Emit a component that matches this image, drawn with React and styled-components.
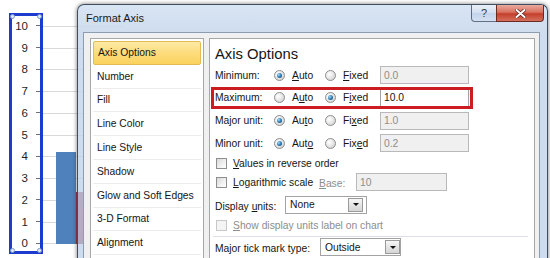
import React from 'react';
import styled, { createGlobalStyle, css } from 'styled-components';

const GlobalStyle = createGlobalStyle`
	html, body {
		margin: 0;
		padding: 0;
	}
	body {
		width: 550px;
		height: 258px;
		overflow: hidden;
		background: #fff;
		font-family: 'Liberation Sans', Arial, sans-serif;
	}
	* {
		box-sizing: border-box;
	}
`;

const Stage = styled.div`
	position: relative;
	width: 550px;
	height: 258px;
	overflow: hidden;
	background: #fff;
`;

// memo: chart behind the dialog
const Chart = styled.div`
	display: flex;
	align-items: flex-start;
	height: 100%;
	padding: 13px 0 0 9px;
`;

const AxisBox = styled.div`
	position: relative;
	width: 34px;
	height: 241px;
	border: 3px solid #1d3ccf;
`;

const Handle = styled.span`
	position: absolute;
	width: 5px;
	height: 5px;
	border-radius: 50%;
	background: #dbe7f7;
	border: 1px solid #7d9cc9;
	${(p) => (p.$top ? 'top: -2px;' : 'bottom: -2px;')}
	${(p) => (p.$left ? 'left: -2px;' : 'right: -2px;')}
`;

const AxisLabels = styled.div`
	display: flex;
	flex-direction: column;
	margin-top: -0.9px;
`;

const AxisLabel = styled.div`
	height: 21.75px;
	display: flex;
	align-items: center;
	justify-content: flex-end;
	gap: 8px;
	font-size: 11.5px;
	color: #1f1f1f;

	&::after {
		content: '';
		width: 4px;
		height: 1px;
		background: #6f6f6f;
	}
`;

const Plot = styled.div`
	width: 80px;
	height: 218.5px;
	margin-top: 12.5px;
	padding-left: 13px;
	display: flex;
	align-items: flex-end;
	background: repeating-linear-gradient(
		to bottom,
		#d9d9d9 0,
		#d9d9d9 1px,
		transparent 1px,
		transparent 21.75px
	);
`;

const Bar = styled.div`
	width: 20px;
	background: ${(p) => p.$color};
`;

// memo: dialog window
const Dialog = styled.div`
	position: absolute;
	left: 77px;
	top: 4px;
	width: 471px;
	height: 270px;
	display: flex;
	flex-direction: column;
	padding: 0 7px 0 5px;
	border: 1px solid #3f4d5e;
	border-bottom: none;
	border-radius: 7px 7px 0 0;
	background: linear-gradient(
		to bottom,
		rgba(214, 227, 243, 0.95) 0,
		rgba(198, 214, 236, 0.85) 30px,
		rgba(186, 206, 234, 0.72) 100%
	);
	box-shadow: 0 0 4px rgba(0, 0, 0, 0.55);
`;

const TitleBar = styled.div`
	height: 27px;
	display: flex;
	align-items: flex-start;
`;

const Title = styled.div`
	flex: 1;
	padding-left: 3px;
	line-height: 27px;
	font-size: 11px;
	color: #1b1b1b;
`;

const CaptionButtons = styled.div`
	display: flex;
	margin-right: -4px;
`;

const HelpButton = styled.div`
	width: 25px;
	height: 17px;
	display: flex;
	align-items: center;
	justify-content: center;
	border: 1px solid rgba(55, 70, 92, 0.75);
	border-top: none;
	border-right: none;
	border-radius: 0 0 0 4px;
	background: linear-gradient(to bottom, #e9f0f9 0, #d3dfee 50%, #c2d3ea 51%, #d4e1f1 100%);
	font-size: 11px;
	color: #3a3a3a;
`;

const CloseButton = styled.div`
	width: 48px;
	height: 17px;
	display: flex;
	align-items: center;
	justify-content: center;
	border: 1px solid #6b2a22;
	border-top: none;
	border-radius: 0 0 4px 0;
	background: linear-gradient(to bottom, #e9a99c 0, #d9725f 45%, #c43f2c 55%, #d4705c 100%);
`;

const Client = styled.div`
	flex: 1;
	display: flex;
	gap: 5px;
	padding: 5px 4px 0 6px;
	border: 1px solid #8d9cb1;
	border-bottom: none;
	background: #f0f0f0;
`;

const Nav = styled.div`
	width: 114px;
	height: 240px;
	flex: none;
	padding: 2px;
	border: 1px solid #a7a7a7;
	background: #fff;
`;

const NavItem = styled.div`
	height: 23.8px;
	display: flex;
	align-items: center;
	padding-left: 4px;
	font-size: 10.3px;
	color: #151515;
	border-bottom: 1px solid #ececec;

	${(p) =>
		p.$active &&
		css`
			border: 1px solid #e2bb57;
			border-radius: 2px;
			background: linear-gradient(to bottom, #feeaa6 0, #fcdc7c 50%, #fbd25f 100%);
		`}
`;

const Panel = styled.div`
	width: 326px;
	height: 240px;
	flex: none;
	padding: 6px 0 0 5px;
	border: 1px solid #a7a7a7;
	background: #fff;
`;

const Heading = styled.div`
	height: 19px;
	line-height: 19px;
	font-size: 14.8px;
	color: #151515;
`;

const Text = styled.span`
	font-size: 10.3px;
	color: ${(p) => (p.$disabled ? '#8d8d8d' : '#151515')};
	white-space: nowrap;
`;

const Key = styled.span`
	text-decoration: underline;
	text-underline-offset: 1px;
`;

const AxisRow = styled.div`
	position: relative;
	height: 22.67px;
	display: grid;
	grid-template-columns: 59px 51px 55px 89px;
	align-items: center;
	width: 254px;

	${(p) =>
		p.$highlight &&
		css`
			&::after {
				content: '';
				position: absolute;
				left: -4px;
				right: -4px;
				top: 0;
				bottom: 0;
				border: 3px solid #cc1c22;
			}
		`}
`;

const Option = styled.div`
	display: flex;
	align-items: center;
	gap: 7px;
`;

const Radio = styled.span`
	width: 11px;
	height: 11px;
	flex: none;
	display: flex;
	align-items: center;
	justify-content: center;
	border-radius: 50%;
	border: 1px solid #8c8c8c;
	background: radial-gradient(circle at 35% 35%, #ffffff 0, #e9e9e9 45%, #c6c6c6 100%);

	${(p) =>
		p.$checked &&
		css`
			&::after {
				content: '';
				width: 5px;
				height: 5px;
				border-radius: 50%;
				background: radial-gradient(circle at 35% 35%, #a6dbf6 0, #2f7db5 50%, #0d3a5e 100%);
			}
		`}
`;

const TextBox = styled.div`
	width: ${(p) => p.$w || 89}px;
	height: 18px;
	display: flex;
	align-items: center;
	padding-left: 3px;
	font-size: 10.3px;
	border: 1px solid ${(p) => (p.$disabled ? '#b9b9b9' : '#a3a3a3')};
	background: ${(p) => (p.$disabled ? '#f0f0f0' : '#fff')};
	color: ${(p) => (p.$disabled ? '#8d8d8d' : '#151515')};
`;

const Row = styled.div`
	height: ${(p) => p.$h}px;
	display: flex;
	align-items: center;
`;

const CheckLabel = styled.div`
	display: flex;
	align-items: center;
	gap: 6px;
	padding-left: 1px;
	width: ${(p) => (p.$w ? `${p.$w}px` : 'auto')};
`;

const Checkbox = styled.span`
	width: 11px;
	height: 11px;
	flex: none;
	border: 1px solid ${(p) => (p.$disabled ? '#c8c8c8' : '#8e8e8e')};
	background: ${(p) =>
		p.$disabled ? '#f4f4f4' : 'linear-gradient(135deg, #d9d9d9 0, #f2f2f2 60%, #ffffff 100%)'};
`;

const FieldLabel = styled.div`
	width: ${(p) => p.$w}px;
	flex: none;
`;

const Select = styled.div`
	width: ${(p) => p.$w}px;
	height: 18px;
	display: flex;
	align-items: center;
	padding: 0 ${(p) => p.$inset}px 0 4px;
	border: 1px solid #a3a3a3;
	background: #fff;
`;

const SelectText = styled.span`
	flex: 1;
	font-size: 10.3px;
	color: #151515;
`;

const DropButton = styled.span`
	width: 15px;
	height: 14px;
	display: flex;
	align-items: center;
	justify-content: center;
	border: 1px solid #9a9a9a;
	background: linear-gradient(to bottom, #f7f7f7 0, #e4e4e4 50%, #d6d6d6 100%);

	&::after {
		content: '';
		border-left: 3px solid transparent;
		border-right: 3px solid transparent;
		border-top: 3px solid #111;
	}
`;

const Separator = styled.div`
	height: 1px;
	margin: 2px 6px 0 -2px;
	background: #dcdfe3;
`;

const navItems = [
	'Axis Options',
	'Number',
	'Fill',
	'Line Color',
	'Line Style',
	'Shadow',
	'Glow and Soft Edges',
	'3-D Format',
	'Alignment',
];

const axisRows = [
	{ label: 'Minimum:', auto: true, value: '0.0', key: 0 },
	{ label: 'Maximum:', auto: false, value: '10.0', key: 1 },
	{ label: 'Major unit:', auto: true, value: '1.0', key: 2 },
	{ label: 'Minor unit:', auto: true, value: '0.2', key: 3 },
];

const bars = [
	{ value: 4.23, color: '#4f81bd' },
	{ value: 2.39, color: '#9b3f4c' },
];

const withKey = (text, i) => (
	<>
		{text.slice(0, i)}
		<Key>{text[i]}</Key>
		{text.slice(i + 1)}
	</>
);

const CloseGlyph = () => (
	<svg width="11" height="9" viewBox="0 0 11 9">
		<path d="M1.5 1 L9.5 8 M9.5 1 L1.5 8" stroke="#5a1f18" strokeWidth="3.4" strokeLinecap="round" />
		<path d="M1.5 1 L9.5 8 M9.5 1 L1.5 8" stroke="#ffffff" strokeWidth="2" strokeLinecap="round" />
	</svg>
);

const App = () => {
	const labels = [10, 9, 8, 7, 6, 5, 4, 3, 2, 1, 0];

	return (
		<>
			<GlobalStyle />
			<Stage>
				<Chart>
					<AxisBox>
						<Handle $top $left />
						<Handle $top />
						<Handle $left />
						<Handle />
						<AxisLabels>
							{labels.map((n) => (
								<AxisLabel key={n}>{n}</AxisLabel>
							))}
						</AxisLabels>
					</AxisBox>
					<Plot>
						{bars.map((bar) => (
							<Bar key={bar.color} $color={bar.color} style={{ height: `${bar.value * 21.75}px` }} />
						))}
					</Plot>
				</Chart>

				<Dialog>
					<TitleBar>
						<Title>Format Axis</Title>
						<CaptionButtons>
							<HelpButton>?</HelpButton>
							<CloseButton>
								<CloseGlyph />
							</CloseButton>
						</CaptionButtons>
					</TitleBar>
					<Client>
						<Nav>
							{navItems.map((item, i) => (
								<NavItem key={item} $active={i === 0}>
									{item}
								</NavItem>
							))}
						</Nav>
						<Panel>
							<Heading>Axis Options</Heading>
							{axisRows.map((row) => (
								<AxisRow key={row.label} $highlight={!row.auto}>
									<Text>{row.label}</Text>
									<Option>
										<Radio $checked={row.auto} />
										<Text>{withKey('Auto', row.key)}</Text>
									</Option>
									<Option>
										<Radio $checked={!row.auto} />
										<Text>{withKey('Fixed', row.key)}</Text>
									</Option>
									<TextBox $disabled={row.auto}>{row.value}</TextBox>
								</AxisRow>
							))}
							<Row $h={17}>
								<CheckLabel>
									<Checkbox />
									<Text>{withKey('Values in reverse order', 0)}</Text>
								</CheckLabel>
							</Row>
							<Row $h={21}>
								<CheckLabel $w={104}>
									<Checkbox />
									<Text>{withKey('Logarithmic scale', 0)}</Text>
								</CheckLabel>
								<FieldLabel $w={37}>
									<Text $disabled>{withKey('Base:', 0)}</Text>
								</FieldLabel>
								<TextBox $disabled $w={91}>
									10
								</TextBox>
							</Row>
							<Row $h={24}>
								<FieldLabel $w={70}>
									<Text>{withKey('Display units:', 8)}</Text>
								</FieldLabel>
								<Select $w={82} $inset={3}>
									<SelectText>None</SelectText>
									<DropButton />
								</Select>
							</Row>
							<Row $h={17}>
								<CheckLabel>
									<Checkbox $disabled />
									<Text $disabled>{withKey('Show display units label on chart', 0)}</Text>
								</CheckLabel>
							</Row>
							<Separator />
							<Row $h={21}>
								<FieldLabel $w={105}>
									<Text>{withKey('Major tick mark type:', 2)}</Text>
								</FieldLabel>
								<Select $w={81} $inset={0}>
									<SelectText>Outside</SelectText>
									<DropButton />
								</Select>
							</Row>
						</Panel>
					</Client>
				</Dialog>
			</Stage>
		</>
	);
};

export default App;
